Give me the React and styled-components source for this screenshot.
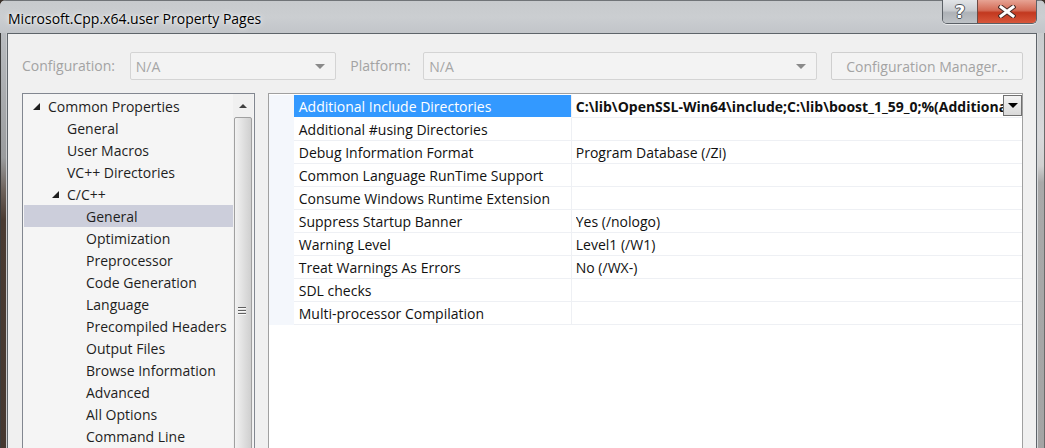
import React from "react";
import styled, { createGlobalStyle } from "styled-components";

const GlobalStyle = createGlobalStyle`
  html, body { margin: 0; padding: 0; background: #3a302a; }
  body { font-family: "Open Sans", "Noto Sans", sans-serif; font-size: 14px; }
  * { box-sizing: border-box; }
`;

const Window = styled.div`
  width: 1045px;
  height: 448px;
  overflow: hidden;
  display: flex;
  flex-direction: column;
  border-radius: 6px 6px 0 0;
  background: #c4c7cb;
`;

const TitleBar = styled.div`
  height: 33px;
  flex: none;
  display: flex;
  align-items: flex-start;
  padding-left: 8px;
  padding-right: 8px;
  border-top: 1px solid #707478;
  background: linear-gradient(180deg, #c7cacd 0%, #cbced1 50%, #c2c5c9 100%);
`;

const Title = styled.div`
  font-size: 14px;
  line-height: 20px;
  padding-top: 8px;
  color: #000;
  text-shadow: 0 0 6px rgba(255, 255, 255, 0.9), 0 0 3px rgba(255, 255, 255, 0.8);
`;

const Caption = styled.div`
  margin-left: auto;
  display: flex;
  height: 24px;
  margin-top: -1px;
  border: 1px solid #5b6066;
  border-top: none;
  border-radius: 0 0 5px 5px;
  overflow: hidden;
  box-shadow: 0 1px 0 rgba(255, 255, 255, 0.6);
`;

const CapButton = styled.div`
  width: ${(p) => p.$w}px;
  height: 100%;
  display: flex;
  align-items: center;
  justify-content: center;
  background: ${(p) =>
    p.$close
      ? "linear-gradient(180deg, #e7a394 0%, #d36a55 45%, #c2381f 55%, #d8573b 100%)"
      : "linear-gradient(180deg, #e2e4e7 0%, #c9ccd0 45%, #aeb2b7 55%, #bec2c6 100%)"};
  border-left: ${(p) => (p.$close ? "1px solid #6c4a44" : "none")};
`;

const HelpGlyph = styled.span`
  font-family: "DejaVu Sans", sans-serif;
  font-weight: bold;
  font-size: 18px;
  line-height: 18px;
  color: #fff;
  text-shadow: -1px 0 #4d5257, 1px 0 #4d5257, 0 -1px #4d5257, 0 1px #4d5257;
`;

const Frame = styled.div`
  flex: 1;
  display: flex;
  min-height: 0;
`;

const LeftEdge = styled.div`
  width: 7px;
  flex: none;
  border-left: 1px solid #3c3c3c;
  border-right: 1px solid #c9cbcd;
  background: linear-gradient(180deg, #b9bcc0 0%, #9a9c9e 30%, #6d625b 38%, #4a3b32 45%, #463830 100%);
`;

const RightEdge = styled.div`
  width: 8px;
  flex: none;
  border-left: 1px solid #d6d8da;
  border-right: 1px solid #6a6a6a;
  background: linear-gradient(180deg, #c9ccce 0%, #d8d9db 25%, #d0d0d0 32%, #a9a9a9 36%, #a4a4a4 100%);
`;

const Content = styled.div`
  flex: 1;
  border: 1px solid #5e646a;
  border-bottom: none;
  background: #f0f0f0;
  padding: 18px 13px 0 14px;
  display: flex;
  flex-direction: column;
  gap: 13px;
  min-width: 0;
`;

const ConfigRow = styled.div`
  display: flex;
  align-items: center;
  height: 28px;
  flex: none;
`;

const ConfigLabel = styled.div`
  width: ${(p) => p.$w}px;
  color: #a3a3a3;
  line-height: 20px;
`;

const Combo = styled.div`
  width: ${(p) => p.$w}px;
  height: 28px;
  border: 1px solid #d4d4d4;
  border-radius: 2px;
  background: #f3f3f3;
  display: flex;
  align-items: center;
  padding: 0 10px 0 5px;
  color: #a6a6a6;
  margin-right: ${(p) => p.$mr || 0}px;
`;

const ComboText = styled.span`
  flex: 1;
`;

const Caret = styled.span`
  width: 0;
  height: 0;
  border-left: 5px solid transparent;
  border-right: 5px solid transparent;
  border-top: 5px solid ${(p) => p.$c || "#8a8a8a"};
`;

const DisabledButton = styled.div`
  width: 192px;
  height: 28px;
  border: 1px solid #cfcfcf;
  border-radius: 2px;
  background: #f3f3f3;
  color: #a3a3a3;
  display: flex;
  align-items: center;
  justify-content: center;
`;

const Panels = styled.div`
  display: flex;
  gap: 13px;
  align-items: flex-start;
`;

const TreePanel = styled.div`
  width: 233px;
  height: 420px;
  border: 1px solid #828790;
  background: #f5f5f5;
  display: flex;
  padding-right: 1px;
`;

const TreeList = styled.div`
  flex: 1;
  padding-top: 1px;
  overflow: hidden;
`;

const TreeRow = styled.div`
  height: 22px;
  margin-left: 1px;
  display: flex;
  align-items: center;
  padding-left: ${(p) => 9 + p.$level * 19}px;
  background: ${(p) => (p.$selected ? "#cccedb" : "transparent")};
  color: #1e1e1e;
  white-space: nowrap;
`;

const ArrowSlot = styled.span`
  width: 15px;
  flex: none;
  display: flex;
  align-items: center;
  padding-top: 1px;
`;

const Scrollbar = styled.div`
  width: 20px;
  flex: none;
  display: flex;
  flex-direction: column;
  background: #f0f0f0;
`;

const ScrollArrow = styled.div`
  height: 23px;
  display: flex;
  align-items: center;
  justify-content: center;
`;

const UpCaret = styled.span`
  width: 0;
  height: 0;
  border-left: 4px solid transparent;
  border-right: 4px solid transparent;
  border-bottom: 4px solid #404040;
`;

const Thumb = styled.div`
  height: 386px;
  margin: 0 1px;
  border: 1px solid #a0a0a0;
  border-radius: 2px;
  background: linear-gradient(90deg, #f2f2f2 0%, #e4e4e4 40%, #cfcfcf 100%);
  display: flex;
  align-items: center;
  justify-content: center;
`;

const Gripper = styled.div`
  width: 8px;
  display: flex;
  flex-direction: column;
  gap: 2px;
  margin-right: 1px;
`;

const GripLine = styled.span`
  height: 1px;
  background: #606060;
  box-shadow: 0 1px 0 #f8f8f8;
`;

const Grid = styled.div`
  width: 756px;
  height: 420px;
  border: 1px solid #a0a0a0;
  border-bottom: none;
  background: #fff;
  padding-top: 1px;
`;

const GridRow = styled.div`
  display: grid;
  grid-template-columns: 25px 278px 1fr;
  height: 23px;
`;

const MarginCell = styled.div`
  background: #f4f7fc;
`;

const NameCell = styled.div`
  border-bottom: 1px solid #eef0f4;
  border-right: 1px solid #eef0f4;
  background: ${(p) => (p.$selected ? "#3399ff" : "#fff")};
  color: ${(p) => (p.$selected ? "#fff" : "#111")};
  padding-left: 5px;
  display: flex;
  align-items: center;
  white-space: nowrap;
  overflow: hidden;
  ${(p) => (p.$selected ? "border-bottom-color: #fff;" : "")}
`;

const ValueCell = styled.div`
  border-bottom: 1px solid #eef0f4;
  display: flex;
  align-items: center;
  padding-left: 4px;
  min-width: 0;
  color: #111;
`;

const ValueText = styled.span`
  flex: 1;
  min-width: 0;
  overflow: hidden;
  white-space: nowrap;
  font-weight: ${(p) => (p.$bold ? 700 : 400)};
`;

const DropButton = styled.div`
  width: 19px;
  height: 21px;
  flex: none;
  border: 1px solid #707070;
  background: linear-gradient(180deg, #f4f4f4 0%, #e6e6e6 50%, #d9d9d9 100%);
  display: flex;
  align-items: center;
  justify-content: center;
  margin-top: -1px;
`;

const treeItems = [
  { label: "Common Properties", level: 0, arrow: true },
  { label: "General", level: 1 },
  { label: "User Macros", level: 1 },
  { label: "VC++ Directories", level: 1 },
  { label: "C/C++", level: 1, arrow: true },
  { label: "General", level: 2, selected: true },
  { label: "Optimization", level: 2 },
  { label: "Preprocessor", level: 2 },
  { label: "Code Generation", level: 2 },
  { label: "Language", level: 2 },
  { label: "Precompiled Headers", level: 2 },
  { label: "Output Files", level: 2 },
  { label: "Browse Information", level: 2 },
  { label: "Advanced", level: 2 },
  { label: "All Options", level: 2 },
  { label: "Command Line", level: 2 },
  { label: "Linker", level: 1 },
];

const props = [
  {
    name: "Additional Include Directories",
    value: "C:\\lib\\OpenSSL-Win64\\include;C:\\lib\\boost_1_59_0;%(AdditionalIncludeDirectories)",
    selected: true,
  },
  { name: "Additional #using Directories", value: "" },
  { name: "Debug Information Format", value: "Program Database (/Zi)" },
  { name: "Common Language RunTime Support", value: "" },
  { name: "Consume Windows Runtime Extension", value: "" },
  { name: "Suppress Startup Banner", value: "Yes (/nologo)" },
  { name: "Warning Level", value: "Level1 (/W1)" },
  { name: "Treat Warnings As Errors", value: "No (/WX-)" },
  { name: "SDL checks", value: "" },
  { name: "Multi-processor Compilation", value: "" },
];

const ExpandedArrow = () => (
  <svg width="7" height="7" viewBox="0 0 7 7">
    <path d="M7 0 L7 7 L0 7 Z" fill="#1e1e1e" />
  </svg>
);

const CloseGlyph = () => (
  <svg width="18" height="13" viewBox="0 0 18 13">
    <path d="M3 2 L15 11 M15 2 L3 11" stroke="#4a2a24" strokeWidth="5" strokeLinecap="square" />
    <path d="M3 2 L15 11 M15 2 L3 11" stroke="#ffffff" strokeWidth="3" strokeLinecap="square" />
  </svg>
);

export default function App() {
  return (
    <>
      <GlobalStyle />
      <Window>
        <TitleBar>
          <Title>Microsoft.Cpp.x64.user Property Pages</Title>
          <Caption>
            <CapButton $w={34}>
              <HelpGlyph>?</HelpGlyph>
            </CapButton>
            <CapButton $w={59} $close>
              <CloseGlyph />
            </CapButton>
          </Caption>
        </TitleBar>
        <Frame>
          <LeftEdge />
          <Content>
            <ConfigRow>
              <ConfigLabel $w={108}>Configuration:</ConfigLabel>
              <Combo $w={207} $mr={14}>
                <ComboText>N/A</ComboText>
                <Caret />
              </Combo>
              <ConfigLabel $w={73}>Platform:</ConfigLabel>
              <Combo $w={395} $mr={14}>
                <ComboText>N/A</ComboText>
                <Caret />
              </Combo>
              <DisabledButton>Configuration Manager...</DisabledButton>
            </ConfigRow>
            <Panels>
              <TreePanel>
                <TreeList>
                  {treeItems.map((it, i) => (
                    <TreeRow key={i} $level={it.level} $selected={it.selected}>
                      <ArrowSlot>{it.arrow ? <ExpandedArrow /> : null}</ArrowSlot>
                      {it.label}
                    </TreeRow>
                  ))}
                </TreeList>
                <Scrollbar>
                  <ScrollArrow>
                    <UpCaret />
                  </ScrollArrow>
                  <Thumb>
                    <Gripper>
                      <GripLine />
                      <GripLine />
                      <GripLine />
                    </Gripper>
                  </Thumb>
                </Scrollbar>
              </TreePanel>
              <Grid>
                {props.map((p, i) => (
                  <GridRow key={i}>
                    <MarginCell />
                    <NameCell $selected={p.selected}>{p.name}</NameCell>
                    <ValueCell>
                      <ValueText $bold={p.selected}>{p.value}</ValueText>
                      {p.selected ? (
                        <DropButton>
                          <Caret $c="#000" />
                        </DropButton>
                      ) : null}
                    </ValueCell>
                  </GridRow>
                ))}
              </Grid>
            </Panels>
          </Content>
          <RightEdge />
        </Frame>
      </Window>
    </>
  );
}
